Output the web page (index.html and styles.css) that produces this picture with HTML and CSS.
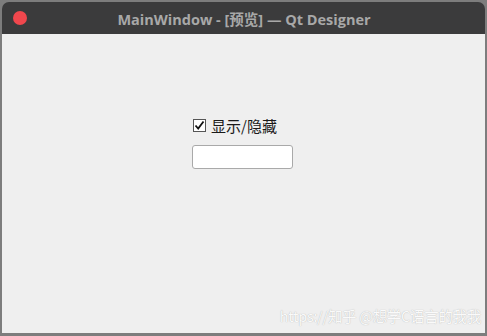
FILE: index.html
```html
<!DOCTYPE html>
<html lang="zh">
<head>
  <meta charset="UTF-8">
  <link rel="stylesheet" href="styles.css">
</head>
<body>
  <div class="window">
    <!-- タイトルバー -->
    <div class="titlebar">
      <span class="close-btn"></span>
      <span class="title">MainWindow - [预览] — Qt Designer</span>
    </div>
    <!-- 本体 -->
    <div class="content">
      <div class="form">
        <label class="check-row">
          <span class="checkbox">
            <svg width="11" height="11" viewBox="0 0 11 11"><path d="M1.5 5.5 L4.2 8.6 L9.5 1.5" fill="none" stroke="#111" stroke-width="1.8"/></svg>
          </span>
          <span class="check-label">显示/隐藏</span>
        </label>
        <div class="line-edit"></div>
      </div>
      <div class="watermark">https://知乎 @想学C语言的我我</div>
    </div>
  </div>
</body>
</html>
```

FILE: styles.css
```css
* {
  margin: 0;
  padding: 0;
  box-sizing: border-box;
}

html, body {
  width: 487px;
  height: 336px;
  overflow: hidden;
}

body {
  background: #7d7d7d;
  padding: 2px 2px 3px 2px;
  font-family: "Noto Sans", "Noto Sans CJK SC", sans-serif;
}

.window {
  height: 100%;
  display: flex;
  flex-direction: column;
  border-radius: 7px 7px 0 0;
  overflow: hidden;
}

/* タイトルバー */
.titlebar {
  height: 32px;
  background: #3b3b3c;
  display: flex;
  align-items: center;
  position: relative;
}

.close-btn {
  position: absolute;
  left: 11px;
  top: 9px;
  width: 14px;
  height: 14px;
  border-radius: 50%;
  background: #f0474d;
}

.title {
  flex: 1;
  text-align: center;
  color: #a8a8a8;
  font-family: "Open Sans", "Noto Sans CJK SC", sans-serif;
  font-weight: bold;
  font-size: 14.5px;
  padding-left: 1px;
}

/* 本体 */
.content {
  flex: 1;
  background: #efefef;
  position: relative;
}

.form {
  padding: 81px 0 0 190px;
  display: flex;
  flex-direction: column;
  gap: 10px;
}

.check-row {
  display: flex;
  align-items: center;
  gap: 5px;
  height: 20px;
}

.checkbox {
  width: 13px;
  height: 13px;
  margin-left: 1px;
  background: #fff;
  border: 1px solid #555;
  display: flex;
  align-items: center;
  justify-content: center;
}

.check-label {
  font-size: 15px;
  color: #1a1a1a;
  font-family: "Noto Sans CJK SC", sans-serif;
}

.line-edit {
  width: 101px;
  height: 24px;
  background: #fff;
  border: 1px solid #a9a9a9;
  border-radius: 3px;
}

.watermark {
  position: absolute;
  right: 4px;
  bottom: 7px;
  font-size: 14.5px;
  letter-spacing: -0.3px;
  color: #fafafa;
  text-shadow: 0 0 1px #a8a8a8;
  font-family: "Noto Sans CJK SC", sans-serif;
}
```
